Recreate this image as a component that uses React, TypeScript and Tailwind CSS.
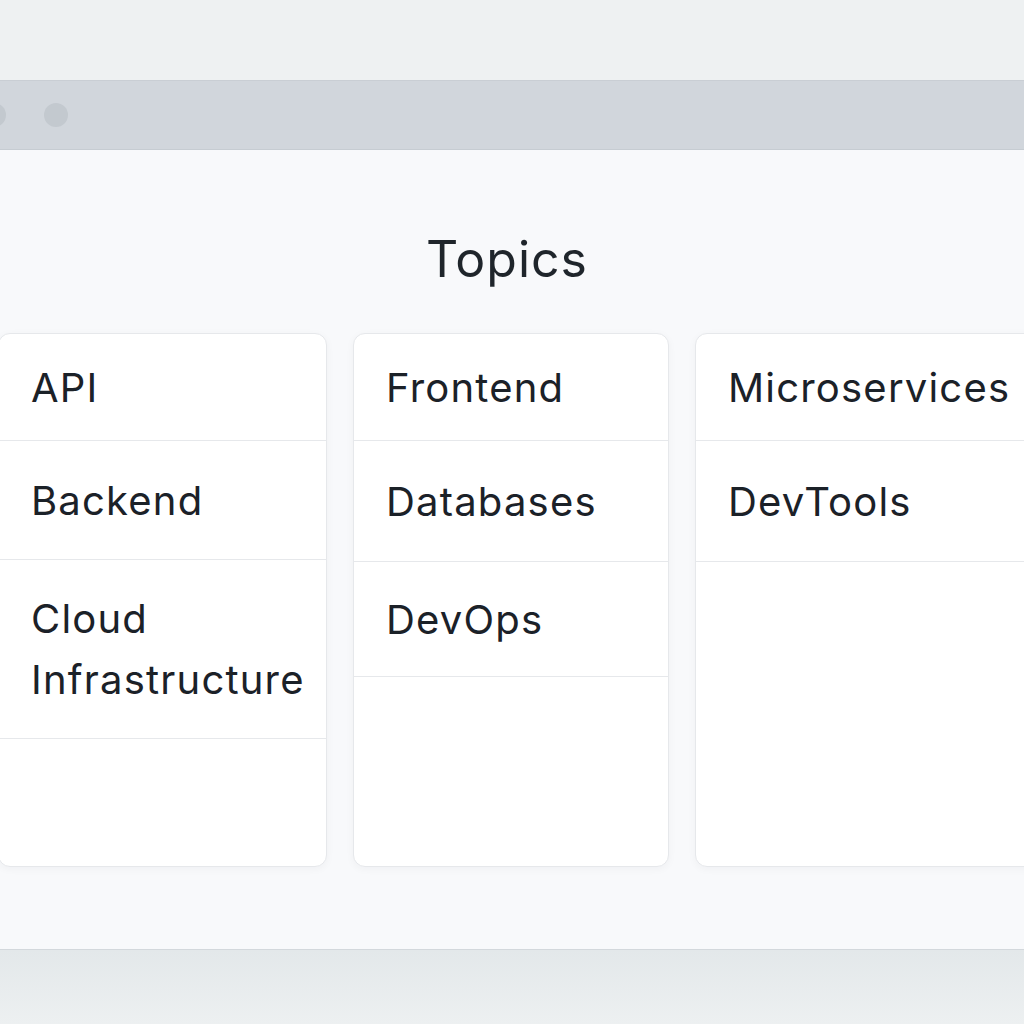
const columns: { items: { label: string; h: string }[]; w: string; ml?: string }[] = [
  {
    w: 'w-[329px]',
    ml: '-ml-[2px]',
    items: [
      { label: 'API', h: 'h-[107px]' },
      { label: 'Backend', h: 'h-[119px]' },
      { label: 'Cloud Infrastructure', h: 'h-[179px]' },
    ],
  },
  {
    w: 'w-[316px]',
    items: [
      { label: 'Frontend', h: 'h-[107px]' },
      { label: 'Databases', h: 'h-[121px]' },
      { label: 'DevOps', h: 'h-[115px]' },
    ],
  },
  {
    w: 'w-[360px]',
    items: [
      { label: 'Microservices', h: 'h-[107px]' },
      { label: 'DevTools', h: 'h-[121px]' },
    ],
  },
];

export default function App() {
  return (
    <div
      className="h-[1024px] w-[1024px] overflow-hidden bg-[#eef1f2] pt-[80px]"
      style={{ fontFamily: 'Inter, "Noto Sans", sans-serif' }}
    >
      {/* Window */}
      <div className="flex flex-col">
        {/* Title bar */}
        <div className="h-[70px] bg-[#d1d6dc] border-t border-[#c9ced4] border-b border-b-[#c6ccd2] flex items-center">
          <div className="-ml-[80px] flex items-center gap-[38px]">
            <span className="h-6 w-6 rounded-full bg-[#c3c9cf]" />
            <span className="h-6 w-6 rounded-full bg-[#c3c9cf]" />
            <span className="h-6 w-6 rounded-full bg-[#c3c9cf]" />
          </div>
        </div>

        {/* Content */}
        <div className="h-[800px] bg-[#f8f9fb] border-b border-[#d3d8dc] flex flex-col">
          <h1 className="mt-[79px] pr-[10px] text-center text-[50px] leading-[60px] font-normal text-[#1f252b] tracking-[0.02em]">
            Topics
          </h1>
          <div className="mt-[44px] flex gap-[26px]">
            {columns.map((col, i) => (
              <div
                key={i}
                className={`${col.w} ${col.ml ?? ''} shrink-0 h-[534px] rounded-[12px] border border-[#e6e8eb] bg-white shadow-[0_2px_8px_rgba(15,23,42,0.04)] flex flex-col overflow-hidden`}
              >
                {col.items.map((item) => (
                  <div
                    key={item.label}
                    className={`${item.h} shrink-0 border-b border-[#e6e8eb] flex items-center px-[32px]`}
                  >
                    <span className="text-[40px] leading-[61px] text-[#1b2128] tracking-[0.03em] max-w-[290px]">
                      {item.label}
                    </span>
                  </div>
                ))}
              </div>
            ))}
          </div>
        </div>
      </div>
      <div className="h-[74px] bg-gradient-to-b from-[#e3e8ea] to-[#edf0f1]" />
    </div>
  );
}
